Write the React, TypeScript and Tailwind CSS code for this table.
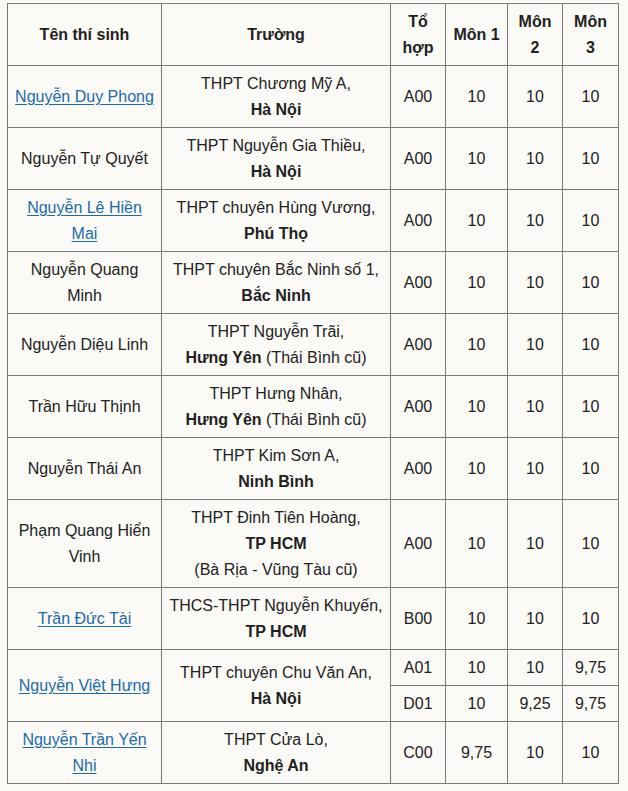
import React from "react";

type Row = {
  name: string;
  link?: boolean;
  school: string;
  place: string;
  note?: string;
  extra?: string;
  scores: [string, string, string, string][];
};

const rows: Row[] = [
  { name: "Nguyễn Duy Phong", link: true, school: "THPT Chương Mỹ A,", place: "Hà Nội", scores: [["A00", "10", "10", "10"]] },
  { name: "Nguyễn Tự Quyết", school: "THPT Nguyễn Gia Thiều,", place: "Hà Nội", scores: [["A00", "10", "10", "10"]] },
  { name: "Nguyễn Lê Hiền Mai", link: true, school: "THPT chuyên Hùng Vương,", place: "Phú Thọ", scores: [["A00", "10", "10", "10"]] },
  { name: "Nguyễn Quang Minh", school: "THPT chuyên Bắc Ninh số 1,", place: "Bắc Ninh", scores: [["A00", "10", "10", "10"]] },
  { name: "Nguyễn Diệu Linh", school: "THPT Nguyễn Trãi,", place: "Hưng Yên", note: " (Thái Bình cũ)", scores: [["A00", "10", "10", "10"]] },
  { name: "Trần Hữu Thịnh", school: "THPT Hưng Nhân,", place: "Hưng Yên", note: " (Thái Bình cũ)", scores: [["A00", "10", "10", "10"]] },
  { name: "Nguyễn Thái An", school: "THPT Kim Sơn A,", place: "Ninh Bình", scores: [["A00", "10", "10", "10"]] },
  { name: "Phạm Quang Hiển Vinh", school: "THPT Đinh Tiên Hoàng,", place: "TP HCM", extra: "(Bà Rịa - Vũng Tàu cũ)", scores: [["A00", "10", "10", "10"]] },
  { name: "Trần Đức Tài", link: true, school: "THCS-THPT Nguyễn Khuyến,", place: "TP HCM", scores: [["B00", "10", "10", "10"]] },
  {
    name: "Nguyễn Việt Hưng",
    link: true,
    school: "THPT chuyên Chu Văn An,",
    place: "Hà Nội",
    scores: [
      ["A01", "10", "10", "9,75"],
      ["D01", "10", "9,25", "9,75"],
    ],
  },
  { name: "Nguyễn Trần Yến Nhi", link: true, school: "THPT Cửa Lò,", place: "Nghệ An", scores: [["C00", "9,75", "10", "10"]] },
];

const cell = "border border-[#7a7a7a] px-[5px] pt-[5px] pb-[4px] text-center align-middle";

export default function App() {
  return (
    <div className="min-h-[791px] bg-[#fbfaf7] pl-[7px] pt-[3px] font-['Liberation_Sans',Arial,sans-serif] text-[16px] leading-[26px] text-[#222]">
      <table className="w-[611px] table-fixed border-collapse">
        <colgroup>
          <col className="w-[154px]" />
          <col className="w-[229px]" />
          <col className="w-[55px]" />
          <col className="w-[62px]" />
          <col className="w-[55px]" />
          <col className="w-[56px]" />
        </colgroup>
        <thead>
          <tr className="font-bold">
            <th className={cell}>Tên thí sinh</th>
            <th className={cell}>Trường</th>
            <th className={cell}>Tổ hợp</th>
            <th className={cell}>Môn 1</th>
            <th className={cell}>Môn 2</th>
            <th className={cell}>Môn 3</th>
          </tr>
        </thead>
        <tbody>
          {rows.map((r) =>
            r.scores.map((s, i) => (
              <tr key={r.name + i}>
                {i === 0 && (
                  <>
                    <td className={cell} rowSpan={r.scores.length}>
                      {r.link ? (
                        <a href="#" className="text-[#1d6aa8] underline underline-offset-2">
                          {r.name}
                        </a>
                      ) : (
                        r.name
                      )}
                    </td>
                    <td className={cell} rowSpan={r.scores.length}>
                      {r.school}
                      <br />
                      <b>{r.place}</b>
                      {r.note}
                      {r.extra && (
                        <>
                          <br />
                          {r.extra}
                        </>
                      )}
                    </td>
                  </>
                )}
                {s.map((v, j) => (
                  <td key={j} className={cell}>
                    {v}
                  </td>
                ))}
              </tr>
            ))
          )}
        </tbody>
      </table>
    </div>
  );
}
